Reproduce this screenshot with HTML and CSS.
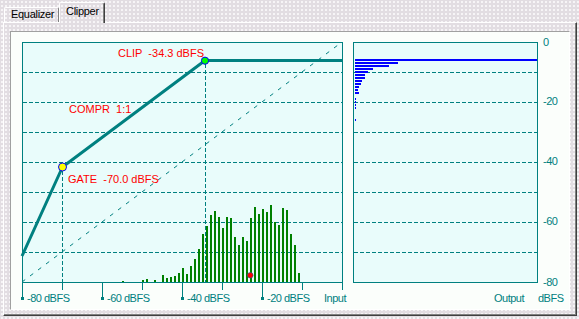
FILE: index.html
```html
<!DOCTYPE html>
<html lang="en">
<head>
    <meta charset="UTF-8">
    <meta name="viewport" content="width=device-width, initial-scale=1.0">
    <link rel="stylesheet" href="styles.css">
    <title>Clipper</title>
</head>
<body>
    <div class="tabs">
        <div class="tab">Equalizer</div>
        <div class="tab active">Clipper</div>
    </div>

    <div class="panel">
        <div class="view">
            <svg class="chart" width="558" height="277" viewBox="11 32 558 277">
                <!-- input / output transfer plot -->
                <rect class="plot" x="22.5" y="42.5" width="320" height="240"/>
                <g id="gridLeft" class="grid"></g>
                <line class="diag" x1="22" y1="282" x2="342" y2="42"/>
                <line class="grid" x1="62.5" y1="171" x2="62.5" y2="282"/>
                <line class="grid" x1="205.5" y1="64" x2="205.5" y2="282"/>
                <g id="histogram" class="hist"></g>
                <polyline class="curve" points="22,256 62.5,167 205,60.5 342,60.5"/>
                <circle class="knee" cx="62.5" cy="167" r="4" fill="#ffff00"/>
                <circle class="knee" cx="205" cy="60.7" r="3.6" fill="#00ff00"/>
                <circle class="peak" cx="250.3" cy="275.3" r="2.8"/>

                <g id="ticks" class="tick"></g>

                <text class="red" x="118" y="57">CLIP  -34.3 dBFS</text>
                <text class="red" x="69" y="113">COMPR  1:1</text>
                <text class="red" x="68" y="183">GATE  -70.0 dBFS</text>

                <text class="axis" x="27" y="302">-80 dBFS</text>
                <text class="axis" x="107" y="302">-60 dBFS</text>
                <text class="axis" x="187" y="302">-40 dBFS</text>
                <text class="axis" x="267" y="302">-20 dBFS</text>
                <text class="axis" x="324" y="302">Input</text>

                <!-- output level meter -->
                <rect class="plot" x="353.5" y="42.5" width="184" height="240"/>
                <g id="gridRight" class="grid"></g>
                <g id="levels" class="level"></g>

                <text class="axis" x="543" y="46">0</text>
                <text class="axis" x="543" y="105">-20</text>
                <text class="axis" x="543" y="165">-40</text>
                <text class="axis" x="543" y="225">-60</text>
                <text class="axis" x="543" y="286">-80</text>
                <text class="axis" x="494" y="302">Output</text>
                <text class="axis" x="538" y="302">dBFS</text>
            </svg>
        </div>
    </div>

    <script>
const svgNS = "http://www.w3.org/2000/svg";

// [x, top] of each input histogram bar, bottom is the axis at 282
const histogram = [
    [122, 281], [142, 280], [146, 279], [154, 280], [162, 275], [166, 278],
    [170, 277], [174, 276], [178, 273], [182, 268], [186, 274], [190, 266],
    [194, 259], [198, 249], [202, 234], [206, 226], [210, 215], [214, 211],
    [218, 217], [222, 228], [226, 217], [230, 218], [234, 237], [238, 245],
    [242, 237], [246, 241], [250, 218], [254, 207], [258, 214], [262, 209],
    [266, 212], [270, 205], [274, 222], [278, 225], [282, 208], [286, 210],
    [290, 234], [294, 245], [298, 273]
];

// [top, right] of each output level bar
const levels = [
    [59, 537], [62, 398], [65, 389], [68, 373], [71, 368], [74, 365],
    [77, 365], [80, 362], [83, 361], [86, 359], [89, 358], [92, 359],
    [98, 356], [101, 356], [104, 356], [107, 356], [119, 356]
];

function add(parent, tag, attrs) {
    const el = document.createElementNS(svgNS, tag);
    for (const key in attrs) {
        el.setAttribute(key, attrs[key]);
    }
    document.getElementById(parent).appendChild(el);
}

for (let y = 72; y < 282; y += 30) {
    add("gridLeft", "line", { x1: 23, y1: y + 0.5, x2: 342, y2: y + 0.5 });
    add("gridRight", "line", { x1: 354, y1: y + 0.5, x2: 537, y2: y + 0.5 });
}

histogram.forEach(function (bar) {
    add("histogram", "rect", { x: bar[0], y: bar[1], width: 2, height: 282 - bar[1] });
});

levels.forEach(function (bar) {
    add("levels", "rect", { x: 355, y: bar[0], width: bar[1] - 355, height: 2 });
});

// ticks under the input axis, every 10 dB; labelled ones get a marker
for (let x = 22; x <= 342; x += 40) {
    const labelled = (x - 22) % 80 === 0 && x < 342;
    add("ticks", "line", { x1: x + 0.5, y1: 283, x2: x + 0.5, y2: labelled ? 298 : 290 });
    if (labelled) {
        add("ticks", "rect", { x: x - 1, y: 297, width: 3, height: 3 });
    }
}
    </script>
</body>
</html>
```

FILE: styles.css
```css
body {
    margin: 0;
    width: 579px;
    height: 319px;
    overflow: hidden;
    font-family: "Liberation Sans", Arial, sans-serif;
    font-size: 11px;
}

body,
.panel,
.tab.active {
    background-color: #e2dde2;
    background-image: radial-gradient(circle, #f7f5f7 0.7px, transparent 1px);
    background-size: 4px 4px;
    background-attachment: fixed;
}

.tabs {
    display: flex;
    align-items: flex-end;
    height: 22px;
    padding-left: 4px;
    box-sizing: border-box;
}

.tab {
    box-sizing: border-box;
    width: 55px;
    height: 15px;
    padding-left: 6px;
    border-top: 1px solid #fff;
    border-left: 1px solid #fff;
    border-right: 1px solid #808080;
    border-radius: 2px 2px 0 0;
    line-height: 13px;
    letter-spacing: -0.3px;
    color: #000;
}

.tab.active {
    position: relative;
    z-index: 1;
    width: 46px;
    height: 21px;
    margin-bottom: -1px;
    padding-top: 1px;
    border-right: 1px solid #404040;
    box-shadow: inset -1px 0 #808080;
    line-height: 14px;
}

.panel {
    box-sizing: border-box;
    width: 574px;
    height: 294px;
    margin-left: 3px;
    padding: 8px 6px 5px 6px;
    border: 1px solid;
    border-color: #fff #404040 #404040 #fff;
    box-shadow: inset -1px -1px #808080;
}

.view {
    box-sizing: border-box;
    width: 560px;
    height: 279px;
    border: 1px solid;
    border-color: #a0a0a0 #fff #fff #a0a0a0;
    background-color: #fbfefb;
}

.chart {
    display: block;
}

.plot {
    fill: #e9fcfb;
    stroke: #008080;
    stroke-width: 1;
    shape-rendering: crispEdges;
}

.grid line,
line.grid {
    stroke: #008080;
    stroke-width: 1;
    stroke-dasharray: 4 2;
    shape-rendering: crispEdges;
}

.diag {
    stroke: #008080;
    stroke-width: 1;
    stroke-dasharray: 4 6;
}

.curve {
    fill: none;
    stroke: #008080;
    stroke-width: 3;
    stroke-linejoin: round;
}

.knee {
    stroke: #0000ff;
    stroke-width: 1;
}

.peak {
    fill: #ff0000;
    stroke: #3050a0;
    stroke-width: 0.6;
}

.hist rect {
    fill: #008000;
    shape-rendering: crispEdges;
}

.level rect {
    fill: #0000ff;
    shape-rendering: crispEdges;
}

.tick line {
    stroke: #008080;
    stroke-width: 1;
    shape-rendering: crispEdges;
}

.tick rect {
    fill: #008080;
}

.red {
    fill: #ff0000;
    font-size: 11px;
    white-space: pre;
}

.axis {
    fill: #008080;
    font-size: 11px;
    letter-spacing: -0.5px;
}
```
